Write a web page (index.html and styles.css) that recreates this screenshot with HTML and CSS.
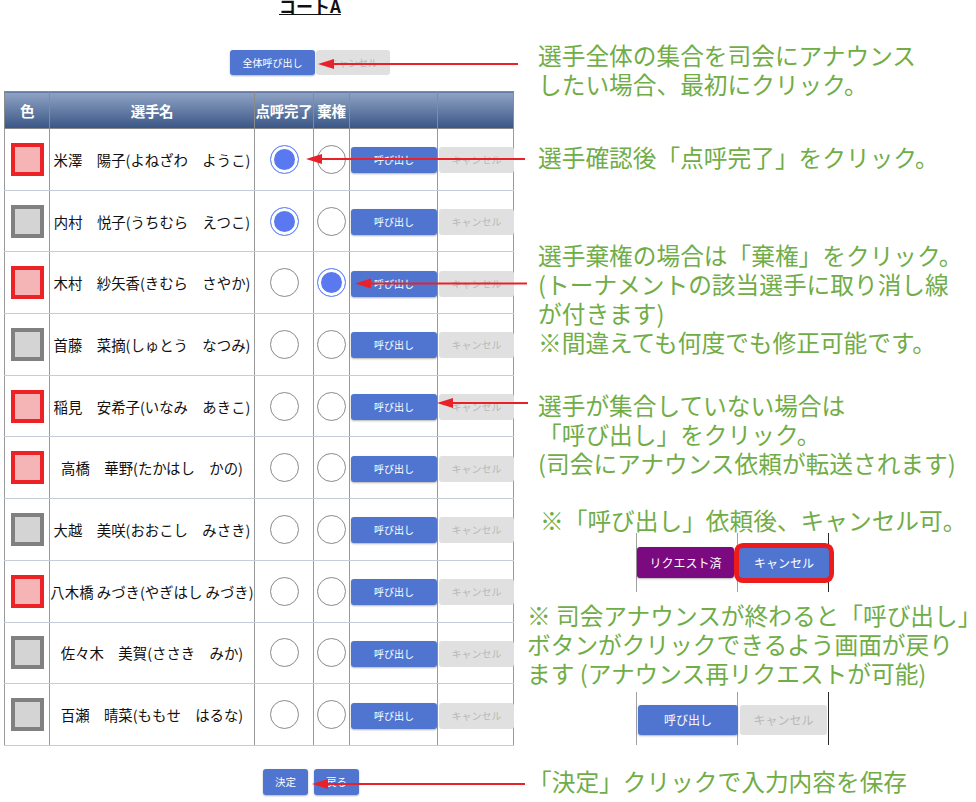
FILE: index.html
```html
<!DOCTYPE html>
<html lang="ja">
<head>
<meta charset="utf-8">
<title>コートA</title>
<link rel="stylesheet" href="styles.css">
</head>
<body>
<div class="page">
  <div class="left">
    <h1 class="title">コートA</h1>
    <div class="top-actions">
      <button class="btn btn-blue btn-all">全体呼び出し</button>
      <button class="btn btn-grey btn-all-cancel">キャンセル</button>
    </div>
    <table class="roster">
      <thead>
        <tr>
          <th class="c-color">色</th>
          <th class="c-name">選手名</th>
          <th class="c-check">点呼完了</th>
          <th class="c-abs">棄権</th>
          <th class="c-call"></th>
          <th class="c-cancel"></th>
        </tr>
      </thead>
      <tbody>
        <tr><td><span class="swatch red"></span></td><td class="name">米澤　陽子(よねざわ　ようこ)</td><td><span class="radio on"></span></td><td><span class="radio"></span></td><td class="call"><button class="btn btn-blue">呼び出し</button></td><td class="cancel"><button class="btn btn-grey">キャンセル</button></td></tr>
        <tr><td><span class="swatch grey"></span></td><td class="name">内村　悦子(うちむら　えつこ)</td><td><span class="radio on"></span></td><td><span class="radio"></span></td><td class="call"><button class="btn btn-blue">呼び出し</button></td><td class="cancel"><button class="btn btn-grey">キャンセル</button></td></tr>
        <tr><td><span class="swatch red"></span></td><td class="name">木村　紗矢香(きむら　さやか)</td><td><span class="radio"></span></td><td><span class="radio on"></span></td><td class="call"><button class="btn btn-blue">呼び出し</button></td><td class="cancel"><button class="btn btn-grey">キャンセル</button></td></tr>
        <tr><td><span class="swatch grey"></span></td><td class="name">首藤　菜摘(しゅとう　なつみ)</td><td><span class="radio"></span></td><td><span class="radio"></span></td><td class="call"><button class="btn btn-blue">呼び出し</button></td><td class="cancel"><button class="btn btn-grey">キャンセル</button></td></tr>
        <tr><td><span class="swatch red"></span></td><td class="name">稲見　安希子(いなみ　あきこ)</td><td><span class="radio"></span></td><td><span class="radio"></span></td><td class="call"><button class="btn btn-blue">呼び出し</button></td><td class="cancel"><button class="btn btn-grey">キャンセル</button></td></tr>
        <tr><td><span class="swatch red"></span></td><td class="name">高橋　華野(たかはし　かの)</td><td><span class="radio"></span></td><td><span class="radio"></span></td><td class="call"><button class="btn btn-blue">呼び出し</button></td><td class="cancel"><button class="btn btn-grey">キャンセル</button></td></tr>
        <tr><td><span class="swatch grey"></span></td><td class="name">大越　美咲(おおこし　みさき)</td><td><span class="radio"></span></td><td><span class="radio"></span></td><td class="call"><button class="btn btn-blue">呼び出し</button></td><td class="cancel"><button class="btn btn-grey">キャンセル</button></td></tr>
        <tr><td><span class="swatch red"></span></td><td class="name">八木橋 みづき(やぎはし みづき)</td><td><span class="radio"></span></td><td><span class="radio"></span></td><td class="call"><button class="btn btn-blue">呼び出し</button></td><td class="cancel"><button class="btn btn-grey">キャンセル</button></td></tr>
        <tr><td><span class="swatch grey"></span></td><td class="name">佐々木　美賀(ささき　みか)</td><td><span class="radio"></span></td><td><span class="radio"></span></td><td class="call"><button class="btn btn-blue">呼び出し</button></td><td class="cancel"><button class="btn btn-grey">キャンセル</button></td></tr>
        <tr><td><span class="swatch grey"></span></td><td class="name">百瀬　晴菜(ももせ　はるな)</td><td><span class="radio"></span></td><td><span class="radio"></span></td><td class="call"><button class="btn btn-blue">呼び出し</button></td><td class="cancel"><button class="btn btn-grey">キャンセル</button></td></tr>
      </tbody>
    </table>
    <div class="bottom-actions">
      <button class="btn btn-blue btn-sm">決定</button>
      <button class="btn btn-blue btn-sm">戻る</button>
    </div>
  </div>

  <div class="notes">
    <p class="note n1">選手全体の集合を司会にアナウンス<br>したい場合、最初にクリック。</p>
    <p class="note n2">選手確認後「点呼完了」をクリック。</p>
    <p class="note n3">選手棄権の場合は「棄権」をクリック。<br>(トーナメントの該当選手に取り消し線<br>が付きます)<br>※間違えても何度でも修正可能です。</p>
    <p class="note n4">選手が集合していない場合は<br>「呼び出し」をクリック。<br>(司会にアナウンス依頼が転送されます)</p>
    <p class="note n5">※「呼び出し」依頼後、キャンセル可。</p>
    <div class="demo demo1">
      <div class="demo-cell first"><button class="btn btn-purple demo-btn">リクエスト済</button></div>
      <div class="demo-cell second"><button class="btn btn-blue demo-btn highlighted">キャンセル</button></div>
    </div>
    <p class="note n6">※ 司会アナウンスが終わると「呼び出し」<br>ボタンがクリックできるよう画面が戻り<br>ます (アナウンス再リクエストが可能)</p>
    <div class="demo demo2">
      <div class="demo-cell first"><button class="btn btn-blue demo-btn">呼び出し</button></div>
      <div class="demo-cell second"><button class="btn btn-grey demo-btn">キャンセル</button></div>
    </div>
    <p class="note n7">「決定」クリックで入力内容を保存</p>
  </div>

  <svg class="arrows" width="976" height="802" viewBox="0 0 976 802" aria-hidden="true">
    <g fill="#e8222a" stroke="#e8222a">
      <line x1="332" y1="64" x2="518" y2="64" stroke-width="2"/>
      <polygon points="318,64 334,59 334,69" stroke="none"/>
      <line x1="320" y1="159" x2="525" y2="159" stroke-width="2"/>
      <polygon points="306,159 322,154 322,164" stroke="none"/>
      <line x1="369" y1="283.5" x2="527" y2="283.5" stroke-width="2"/>
      <polygon points="355,283.5 371,278.5 371,288.5" stroke="none"/>
      <line x1="451" y1="403" x2="528" y2="403" stroke-width="2"/>
      <polygon points="437,403 453,398 453,408" stroke="none"/>
      <line x1="326" y1="784" x2="525" y2="784" stroke-width="2"/>
      <polygon points="312,784 328,779 328,789" stroke="none"/>
    </g>
  </svg>
</div>
</body>
</html>
```

FILE: styles.css
```css
* { box-sizing: border-box; }

html, body {
  margin: 0;
  padding: 0;
  background: #ffffff;
}

body {
  font-family: "Noto Sans CJK JP", "Noto Sans", sans-serif;
  color: #111;
  width: 976px;
  height: 802px;
  overflow: hidden;
}

.page {
  position: relative;
  display: flex;
  width: 976px;
  height: 802px;
}

.left {
  width: 520px;
  flex: none;
}

.title {
  margin: -3px 0 0 279px;
  font-size: 17px;
  line-height: 18px;
  font-weight: 700;
  text-decoration: underline;
  width: max-content;
}

.btn {
  font-family: "Noto Sans CJK JP", "Noto Sans", sans-serif;
  border: none;
  border-radius: 3px;
  padding: 0;
  font-size: 10.5px;
  line-height: 1;
  cursor: pointer;
}

.btn-blue {
  background: #5075d1;
  color: #ffffff;
  box-shadow: 0 1px 2px rgba(0, 0, 0, 0.3);
}

.btn-grey {
  background: #e0e0e0;
  color: #b8b8b8;
}

.btn-purple {
  background: #7b0a80;
  color: #ffffff;
  box-shadow: 0 1px 2px rgba(0, 0, 0, 0.3);
}

.top-actions {
  display: flex;
  gap: 1px;
  margin-top: 35px;
  padding-left: 230px;
}

.btn-all {
  width: 85px;
  height: 25px;
  font-size: 10px;
}

.btn-all-cancel {
  width: 74px;
  height: 25px;
  font-size: 10px;
}

.roster {
  margin: 16px 0 0 4px;
  width: 509px;
  table-layout: fixed;
  border-collapse: collapse;
  border: 1px solid #999;
}

.c-color { width: 45px; }
.c-name { width: 205px; }
.c-check { width: 59px; }
.c-abs { width: 36px; }
.c-call { width: 88px; }
.c-cancel { width: 76px; }

.roster th {
  height: 37px;
  padding: 0;
  background: linear-gradient(#8fa3c5, #3a5686);
  color: #ffffff;
  font-size: 14.5px;
  font-weight: 700;
  border: 1px solid #8a8a8a;
  white-space: nowrap;
  letter-spacing: -0.3px;
}

.roster td {
  height: 61.7px;
  padding: 0;
  text-align: center;
  vertical-align: middle;
  border-left: 1px solid #9a9a9a;
  border-right: 1px solid #9a9a9a;
  border-bottom: 1px solid #c6ccd8;
}

.roster td.name {
  font-size: 14.4px;
  white-space: nowrap;
  color: #111;
}

.swatch {
  display: inline-block;
  width: 33px;
  height: 33px;
  vertical-align: middle;
  border: 4px solid #808080;
  background: #d4d4d4;
}

.swatch.red {
  border-color: #ec2226;
  background: #f5b5b6;
}

.radio {
  display: inline-block;
  width: 29px;
  height: 29px;
  vertical-align: middle;
  border-radius: 50%;
  border: 1px solid #8a8a8a;
  background: #ffffff;
}

.radio.on {
  border-color: #6b8cf4;
  background: #5a78f0;
  box-shadow: inset 0 0 0 3px #ffffff;
}

.roster td.call,
.roster td.cancel {
  padding: 0 1px;
}

.call .btn {
  width: 86px;
  height: 26px;
  font-size: 10px;
}

.cancel .btn {
  width: 75px;
  height: 26px;
  font-size: 10px;
}

.bottom-actions {
  display: flex;
  gap: 6px;
  margin-top: 23px;
  padding-left: 263px;
}

.btn-sm {
  width: 45px;
  height: 26px;
  font-size: 10.5px;
}

/* Notes column */
.notes {
  flex: 1;
  padding-top: 41px;
  color: #70ad47;
  font-size: 23.7px;
  line-height: 29px;
}

.note {
  margin: 0;
  padding-left: 18px;
  white-space: nowrap;
}

.n2 { margin-top: 43.5px; }
.n3 { margin-top: 69px; }
.n4 { margin-top: 34px; }
.n5 { margin-top: 28px; padding-left: 20px; }
.n6 { margin-top: 8.5px; padding-left: 7px; }
.n7 { margin-top: 22px; padding-left: 8px; }

.demo {
  display: flex;
  margin-left: 116px;
}

.demo1 {
  margin-top: -1.5px;
  height: 59px;
}

.demo2 {
  margin-top: 4px;
  height: 53px;
}

.demo-cell {
  height: 100%;
  position: relative;
}

.demo-cell.first {
  width: 102px;
  border-left: 1px solid #a0a0a0;
  border-right: 1px solid #a0a0a0;
}

.demo-cell.second {
  width: 91px;
  border-right: 1px solid #2a2a2a;
}

.demo-btn {
  font-size: 12px;
  height: 31px;
}

.demo1 .first .demo-btn {
  width: 97px;
  margin-top: 14px;
}

.demo1 .second .demo-btn {
  width: 90px;
  height: 30px;
  margin-top: 15px;
  margin-left: 1px;
}

.highlighted {
  border-radius: 4px;
  box-shadow: 0 0 0 5px #ec1c1c;
}

.demo2 .first .demo-btn {
  width: 100px;
  height: 30px;
  margin-top: 13px;
  margin-left: 1px;
}

.demo2 .second .demo-btn {
  width: 87px;
  height: 30px;
  margin-top: 13px;
  margin-left: 2px;
}

.arrows {
  position: absolute;
  left: 0;
  top: 0;
  pointer-events: none;
}
```
